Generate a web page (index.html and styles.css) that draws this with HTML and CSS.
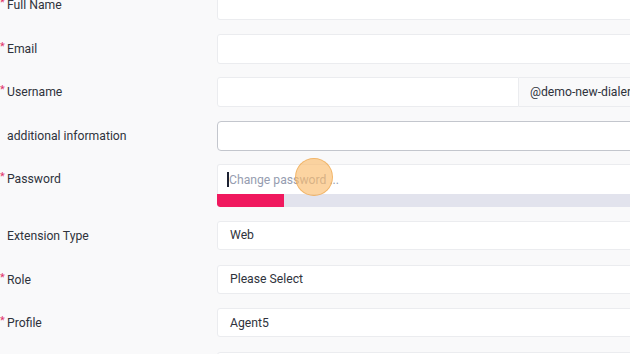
FILE: index.html
```html
<!DOCTYPE html>
<html lang="en">
<head>
  <meta charset="UTF-8">
  <meta name="viewport" content="width=device-width, initial-scale=1.0">
  <title>Edit User</title>
  <link rel="stylesheet" href="styles.css">
</head>
<body>

<form class="user-form">
  <div class="form-row">
    <label class="form-label required">Full Name</label>
    <div class="form-field"><input type="text" class="form-input"></div>
  </div>

  <div class="form-row">
    <label class="form-label required">Email</label>
    <div class="form-field"><input type="text" class="form-input"></div>
  </div>

  <div class="form-row">
    <label class="form-label required">Username</label>
    <div class="form-field input-group">
      <input type="text" class="form-input">
      <span class="input-addon">@demo-new-dialer.com</span>
    </div>
  </div>

  <div class="form-row">
    <label class="form-label">additional information</label>
    <div class="form-field"><input type="text" class="form-input focused"></div>
  </div>

  <div class="form-row">
    <label class="form-label required">Password</label>
    <div class="form-field">
      <div class="password-box">
        <span class="caret"></span>
        <input type="password" class="form-input password-input" placeholder="Change password ...">
        <span class="click-mark"></span>
      </div>
      <div class="strength-bar"><div class="strength-fill" style="width: 67px"></div></div>
    </div>
  </div>

  <div class="form-row">
    <label class="form-label">Extension Type</label>
    <div class="form-field"><div class="form-select">Web</div></div>
  </div>

  <div class="form-row">
    <label class="form-label required">Role</label>
    <div class="form-field"><div class="form-select">Please Select</div></div>
  </div>

  <div class="form-row">
    <label class="form-label required">Profile</label>
    <div class="form-field"><div class="form-select">Agent5</div></div>
  </div>

  <div class="form-row">
    <label class="form-label"></label>
    <div class="form-field"><div class="form-select"></div></div>
  </div>
</form>

</body>
</html>
```

FILE: styles.css
```css
body {
  margin: 0;
  background-color: #f9f9fa;
  font-family: Roboto, "Liberation Sans", sans-serif;
  font-size: 12.2px;
  color: #2f333c;
  overflow: hidden;
}
.user-form {
  width: 760px;
  margin-top: -10px;
  display: flex;
  flex-direction: column;
  gap: 13.6px;
}
.form-row {
  display: grid;
  grid-template-columns: 217px 1fr;
  align-items: start;
}
.form-label {
  height: 30px;
  display: flex;
  align-items: center;
  padding-left: 7px;
  position: relative;
}
.form-label.required::before {
  content: "*";
  position: absolute;
  left: 0;
  top: 6px;
  color: #e0336b;
  font-size: 11px;
}
.form-input, .form-select {
  box-sizing: border-box;
  width: 100%;
  height: 30px;
  border: 1px solid #ebecef;
  border-radius: 3px;
  background-color: #ffffff;
  font-family: inherit;
  font-size: 12.2px;
  color: #2f333c;
  padding: 0 12px;
  outline: none;
}
.form-select {
  display: flex;
  align-items: center;
  height: 29px;
}
.form-input.focused {
  border-color: #c3c6cd;
  border-radius: 4px;
}
.input-group {
  display: flex;
}
.input-group .form-input {
  width: 302px;
  border-radius: 3px 0 0 3px;
}
.input-addon {
  box-sizing: border-box;
  height: 30px;
  display: flex;
  align-items: center;
  padding: 0 11px;
  background-color: #f9f9fa;
  border: 1px solid #ebecef;
  border-left: none;
  white-space: nowrap;
  flex: 1;
}
.password-box {
  position: relative;
}
.password-input {
  border-bottom: none;
  border-radius: 3px 3px 0 0;
  padding-left: 11px;
}
.password-input::placeholder {
  color: #969db0;
}
.caret {
  position: absolute;
  left: 10px;
  top: 8px;
  width: 1.5px;
  height: 15px;
  background-color: #1d2233;
}
.click-mark {
  position: absolute;
  left: 78px;
  top: -6px;
  width: 36px;
  height: 36px;
  border-radius: 50%;
  background-color: rgba(251, 189, 110, 0.65);
  border: 1px solid rgba(236, 168, 80, 0.7);
}
.strength-bar {
  height: 13px;
  background-color: #e2e3ed;
  border-radius: 0 0 3px 3px;
  overflow: hidden;
}
.strength-fill {
  height: 100%;
  background-color: #f0195e;
  border-radius: 0 0 0 3px;
}
```
